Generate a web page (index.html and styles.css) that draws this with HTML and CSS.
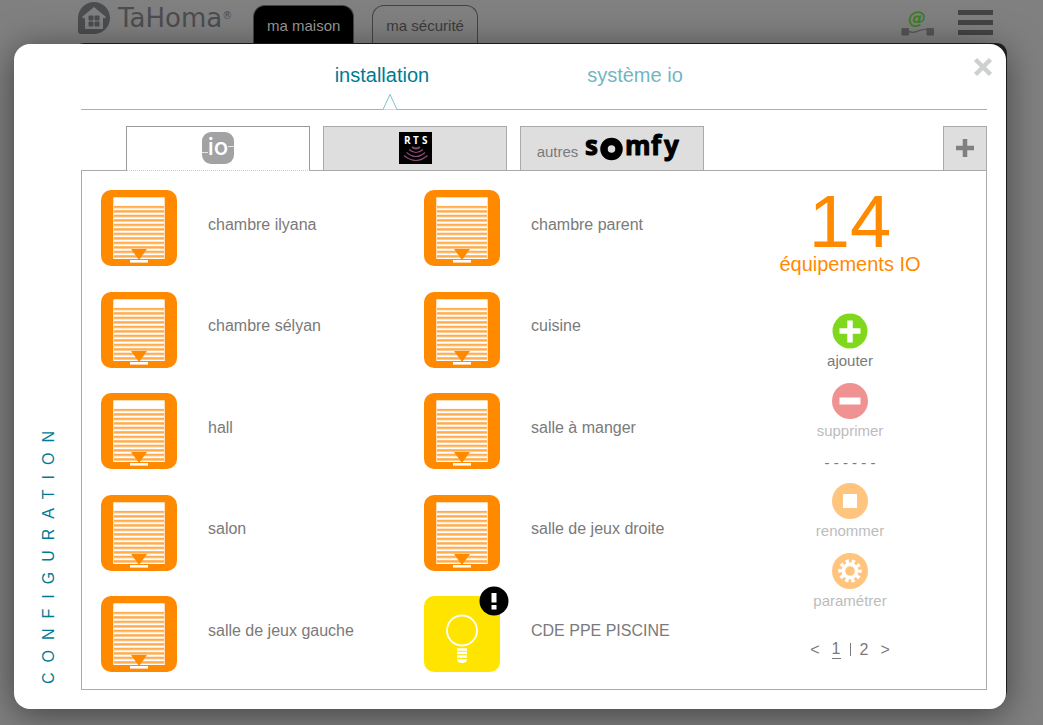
FILE: index.html
```html
<!DOCTYPE html>
<html lang="fr">
<head>
<meta charset="utf-8">
<meta name="viewport" content="width=device-width, initial-scale=1">
<title>TaHoma – configuration</title>
<link rel="stylesheet" href="styles.css">
</head>
<body>
<svg class="defs" aria-hidden="true">
  <defs>
    <pattern id="slats" width="52" height="4.5" y="15.7" patternUnits="userSpaceOnUse">
      <rect width="52" height="4.5" fill="#fff"/>
      <rect width="52" height="2.4" fill="#ffac4f"/>
    </pattern>
    <symbol id="blind" viewBox="0 0 76 76">
      <rect width="76" height="76" rx="10" fill="#ff8a00"/>
      <rect x="12.3" y="7.3" width="51.4" height="61.7" fill="#fff"/>
      <rect x="13" y="15.7" width="50" height="52.5" fill="url(#slats)"/>
      <path d="M30 59h16l-8 11z" fill="#ff8a00"/>
      <rect x="29" y="70" width="18" height="2.6" fill="#fff"/>
    </symbol>
  </defs>
</svg>

<header class="topbar">
  <div class="brand">
    <svg width="34" height="34" viewBox="0 0 34 34" aria-hidden="true">
      <path d="M1 17A16 16 0 1 1 17 33H4Q1 33 1 30z" fill="#4b4d50"/>
      <path d="M17 6 5 16l1.500 1.500L8 16.500V28h18V16.500l1.500 1L29 16z" fill="#808080"/>
      <g fill="#4b4d50"><rect x="11.500" y="14.500" width="5" height="5" rx="1"/><rect x="17.500" y="14.500" width="5" height="5" rx="1"/><rect x="11.500" y="20.500" width="5" height="5" rx="1"/><rect x="17.500" y="20.500" width="5" height="5" rx="1"/></g>
    </svg>
    <span class="brand-name">TaHoma<sup>®</sup></span>
  </div>
  <nav class="top-tabs">
    <a class="top-tab active" href="#maison">ma maison</a>
    <a class="top-tab" href="#securite">ma sécurité</a>
  </nav>
  <div class="top-actions">
    <svg class="link-status" width="34" height="28" viewBox="0 0 34 28" role="img" aria-label="Connexion">
      <text class="at" x="16" y="15" text-anchor="middle">@</text>
      <path d="M8 22.500c7 3.500 9-3 18-2" fill="none" stroke="#5a5a5a" stroke-width="1.400"/>
      <rect x="0.500" y="19" width="7.500" height="7.500" rx="1" fill="#555"/><rect x="25.500" y="19" width="7.500" height="7.500" rx="1" fill="#555"/>
    </svg>
    <button class="menu" type="button" aria-label="Menu"><span></span><span></span><span></span></button>
  </div>
</header>

<div class="stage">
  <div class="frame"></div>
  <main class="dialog">
    <h1 class="side-title">CONFIGURATION</h1>
    <button class="close" type="button" aria-label="Fermer">
      <svg width="20" height="20" viewBox="0 0 20 20"><path d="M2.500 2.500l15 15M17.500 2.500l-15 15" stroke="#ccd0d0" stroke-width="4.500"/></svg>
    </button>
    <nav class="sections">
      <a class="section active" href="#installation">installation
        <svg class="caret" width="16" height="17" viewBox="0 0 16 17" aria-hidden="true"><path d="M1 16.500 8 1.500l7 15" fill="#fff" stroke="#82c0c8"/></svg>
      </a>
      <a class="section" href="#systeme">système io</a>
    </nav>

    <div class="tabs">
      <button class="tab active" type="button" aria-label="io">
        <svg class="io-logo" width="32" height="32" viewBox="0 0 32 32">
          <rect width="32" height="32" rx="9" fill="#a0a2a4"/>
          <path d="M0 20.500h6M26 14.500h6" stroke="#e6e6e6"/>
          <text class="io" x="16" y="23" text-anchor="middle">io</text>
        </svg>
      </button>
      <button class="tab" type="button" aria-label="RTS">
        <svg width="33" height="32" viewBox="0 0 33 32">
          <rect width="33" height="32" fill="#000"/>
          <text class="rts" y="12"><tspan x="5">R</tspan><tspan x="14">T</tspan><tspan x="23">S</tspan></text>
          <g fill="none" stroke="#8c4a76" stroke-width="1.200"><path d="M13 15q4 3 8 0" stroke-width="1.800"/><path d="M10 17.500q7 6 14 0"/><path d="M7.500 20.500q9.500 8 18.500 0"/><path d="M5 23.500q12 10 23.500 0"/></g>
        </svg>
      </button>
      <button class="tab" type="button">
        <span class="others">autres</span>
        <svg width="103" height="40" viewBox="0 -4 103 40" aria-label="somfy">
          <text class="somfy" y="23"><tspan x="1">s</tspan><tspan x="41">m</tspan><tspan x="67">f</tspan><tspan x="80">y</tspan></text>
          <circle cx="27.500" cy="17" r="7.500" fill="#dedede" stroke="#000" stroke-width="7.500"/>
        </svg>
      </button>
      <button class="tab add" type="button" aria-label="Ajouter un onglet">
        <svg width="18" height="18" viewBox="0 0 18 18"><path d="M9 0v18M0 9h18" stroke="#808080" stroke-width="4.500"/></svg>
      </button>
    </div>

    <section class="panel">
      <ul class="devices">
        <li><svg class="device-icon"><use href="#blind"/></svg><span>chambre ilyana</span></li>
        <li><svg class="device-icon"><use href="#blind"/></svg><span>chambre parent</span></li>
        <li><svg class="device-icon"><use href="#blind"/></svg><span>chambre sélyan</span></li>
        <li><svg class="device-icon"><use href="#blind"/></svg><span>cuisine</span></li>
        <li><svg class="device-icon"><use href="#blind"/></svg><span>hall</span></li>
        <li><svg class="device-icon"><use href="#blind"/></svg><span>salle à manger</span></li>
        <li><svg class="device-icon"><use href="#blind"/></svg><span>salon</span></li>
        <li><svg class="device-icon"><use href="#blind"/></svg><span>salle de jeux droite</span></li>
        <li><svg class="device-icon"><use href="#blind"/></svg><span>salle de jeux gauche</span></li>
        <li>
          <svg class="device-icon" viewBox="0 0 76 76">
            <rect width="76" height="76" rx="10" fill="#ffe400"/>
            <circle cx="38" cy="34.500" r="15" fill="none" stroke="#fff" stroke-width="1.800"/>
            <path d="M33 53.500h10M33 57h10M33 60.500h10" stroke="#fff" stroke-width="2.400"/>
            <path d="M33 63h10q0 4-5 4t-5-4z" fill="#fff"/>
          </svg>
          <svg class="alert" width="30" height="30" viewBox="0 0 30 30" role="img" aria-label="Attention"><circle cx="15" cy="15" r="14.500"/><path d="M12.500 7h5v9.500h-5zM12.500 19h5v4.500h-5z" fill="#fff"/></svg>
          <span>CDE PPE PISCINE</span>
        </li>
      </ul>

      <aside class="summary">
        <p class="count">14</p>
        <p class="count-label">équipements IO</p>
        <div class="actions">
          <button class="action" type="button">
            <svg width="36" height="36" viewBox="0 0 36 36"><circle cx="18" cy="18" r="17.500" fill="#80d81c"/><path d="M18 7.500v22M7.500 18h21" stroke="#fff" stroke-width="5.500"/></svg>ajouter
          </button>
          <button class="action" type="button" disabled>
            <svg width="36" height="36" viewBox="0 0 36 36"><circle cx="18" cy="18" r="18" fill="#e42828"/><path d="M7.500 18h21" stroke="#fff" stroke-width="7"/></svg>supprimer
          </button>
        </div>
        <p class="dashes" aria-hidden="true">- - - - - -</p>
        <div class="actions">
          <button class="action" type="button" disabled>
            <svg width="36" height="36" viewBox="0 0 36 36"><circle cx="18" cy="18" r="18" fill="#ff8a00"/><rect x="11" y="11" width="14" height="14" fill="#fff"/></svg>renommer
          </button>
          <button class="action" type="button" disabled>
            <svg width="36" height="36" viewBox="0 0 36 36"><circle cx="18" cy="18" r="18" fill="#ff8a00"/><circle cx="18" cy="18" r="6.600" fill="none" stroke="#fff" stroke-width="3.600"/><circle cx="18" cy="18" r="9.700" fill="none" stroke="#fff" stroke-width="4" stroke-dasharray="3.300 2.795" stroke-dashoffset="1.650"/></svg>paramétrer
          </button>
        </div>
        <nav class="pager">
          <a href="#prev">&lt;</a><a class="current" href="#1">1</a><span class="bar"></span><a href="#2">2</a><a href="#next">&gt;</a>
        </nav>
      </aside>
    </section>
  </main>
</div>
</body>
</html>
```
FILE: styles.css
```css
* {
  box-sizing: border-box;
}

body {
  margin: 0;
  min-height: 100vh;
  display: flex;
  flex-direction: column;
  background: #808080;
  color: #7a7a7a;
  font-family: "Liberation Sans", Arial, sans-serif;
  font-size: 16px;
}

a {
  color: inherit;
  text-decoration: none;
}

button {
  padding: 0;
  border: 0;
  background: none;
  color: inherit;
  font: inherit;
}

svg {
  display: block;
  flex: none;
}

p {
  margin: 0;
}

.defs {
  position: absolute;
  width: 0;
  height: 0;
}

/* Top bar */
.topbar {
  display: flex;
  height: 44px;
  padding: 0 50px 0 77px;
}

.brand {
  display: flex;
  gap: 7px;
  width: 176px;
  padding-top: 1px;
}

.brand-name {
  color: #4b4d50;
  font-family: "DejaVu Sans", Verdana, sans-serif;
  font-size: 26px;
  line-height: 34px;
}

.brand-name sup {
  font-size: 10px;
  line-height: 10px;
  vertical-align: 8px;
}

.top-tabs {
  display: flex;
  gap: 18px;
  padding-top: 5px;
}

.top-tab {
  padding: 0 13px;
  border: 1px solid #444;
  border-bottom: 0;
  border-radius: 12px 12px 0 0;
  color: #3c3c3c;
  font-size: 15px;
  line-height: 40px;
}

.top-tab.active {
  background: #000;
  color: #999;
}

.top-actions {
  display: flex;
  gap: 23px;
  margin-left: auto;
  padding-top: 9px;
}

.link-status,
.io-logo {
  overflow: visible;
}

.at {
  fill: #3c7d22;
  font-family: "DejaVu Sans", sans-serif;
  font-size: 18px;
  font-style: italic;
  font-weight: bold;
}

.menu {
  display: flex;
  flex-direction: column;
  gap: 5px;
  width: 35px;
  padding-top: 1px;
}

.menu span {
  width: 35px;
  height: 5px;
  background: #444;
}

/* Dialog */
.stage {
  flex: 1;
  display: grid;
  padding: 0 37px 16px 14px;
}

.frame,
.dialog {
  grid-area: 1 / 1;
  border-radius: 16px;
}

.frame {
  margin: -1px -1px 8px 60px;
  border-radius: 10px;
  background: #222;
}

.dialog {
  position: relative;
  display: flex;
  flex-direction: column;
  padding: 0 19px 19px 67px;
  background: #fff;
  box-shadow: 0 5px 36px rgba(0, 0, 0, 0.5);
}

.side-title {
  position: absolute;
  left: 25px;
  bottom: 25px;
  margin: 0;
  color: #007a94;
  font-size: 16px;
  font-weight: normal;
  letter-spacing: 10px;
  line-height: 20px;
  writing-mode: vertical-rl;
  transform: rotate(180deg);
}

.close {
  position: absolute;
  top: 13px;
  right: 13px;
}

.sections {
  display: flex;
  gap: 158px;
  height: 66px;
  padding: 19px 0 0 28%;
  border-bottom: 1px solid #82c0c8;
  color: #72b6c2;
  font-size: 20px;
  line-height: 24px;
}

.section {
  position: relative;
  height: 46px;
}

.section.active {
  color: #007a94;
}

.caret {
  position: absolute;
  bottom: -1px;
  left: 50%;
}

/* Protocol tabs */
.tabs {
  display: flex;
  gap: 13px;
  margin-top: 16px;
  padding-left: 45px;
}

.tab {
  display: flex;
  flex: 0 1 184px;
  align-items: center;
  justify-content: center;
  height: 44px;
  padding-bottom: 2px;
  border: 1px solid #aaa;
  border-bottom: 0;
  background: #dedede;
}

.tab.active {
  height: 45px;
  margin-bottom: -1px;
  border: 1px solid #999;
  border-bottom: 1px dotted #ccc;
  background: #fff;
  z-index: 1;
}

.tab.add {
  flex: 0 0 44px;
  margin-left: auto;
}

.io {
  fill: #fff;
  font-family: Inter, sans-serif;
  font-size: 24px;
  font-weight: 500;
}

.rts {
  fill: #fff;
  font-family: "Open Sans", sans-serif;
  font-size: 10px;
  font-weight: bold;
}

.somfy {
  fill: #000;
  stroke: #000;
  stroke-width: 1px;
  stroke-linejoin: round;
  font-family: "Open Sans", sans-serif;
  font-size: 26px;
  font-weight: bold;
}

.others {
  padding: 8px 6px 0 0;
  font-size: 15px;
}

/* Panel */
.panel {
  flex: 1;
  display: grid;
  grid-template-columns: 646fr 206fr;
  padding: 19px 33px 17px 19px;
  border: 1px solid #aaa;
}

.devices {
  display: grid;
  grid-template-columns: 1fr 1fr;
  align-content: space-between;
  margin: 0;
  padding: 0;
  list-style: none;
}

.devices li {
  position: relative;
  display: flex;
  align-items: center;
  gap: 31px;
}

.devices span {
  padding-bottom: 7px;
}

.device-icon {
  width: 76px;
  height: 76px;
}

.alert {
  position: absolute;
  top: -10px;
  left: 55px;
}

.summary {
  display: flex;
  flex-direction: column;
  align-items: center;
}

.count {
  color: #ff8a00;
  font-size: 74px;
  line-height: 63px;
}

.count-label {
  margin-bottom: 37px;
  color: #ff8a00;
  font-size: 20px;
  line-height: 23px;
}

.actions {
  display: flex;
  flex-direction: column;
  gap: 10px;
}

.action {
  display: flex;
  flex-direction: column;
  align-items: center;
  font-size: 15px;
  line-height: 24px;
}

.action:disabled {
  opacity: 0.5;
}

.dashes {
  font-size: 15px;
  line-height: 40px;
}

.pager {
  display: flex;
  align-items: center;
  gap: 12px;
  padding-top: 27px;
  line-height: 18px;
}

.pager .current {
  border-bottom: 1px solid;
}

.pager .bar {
  width: 1px;
  height: 13px;
  margin: 0 -3px;
  background: #7a7a7a;
}
```
